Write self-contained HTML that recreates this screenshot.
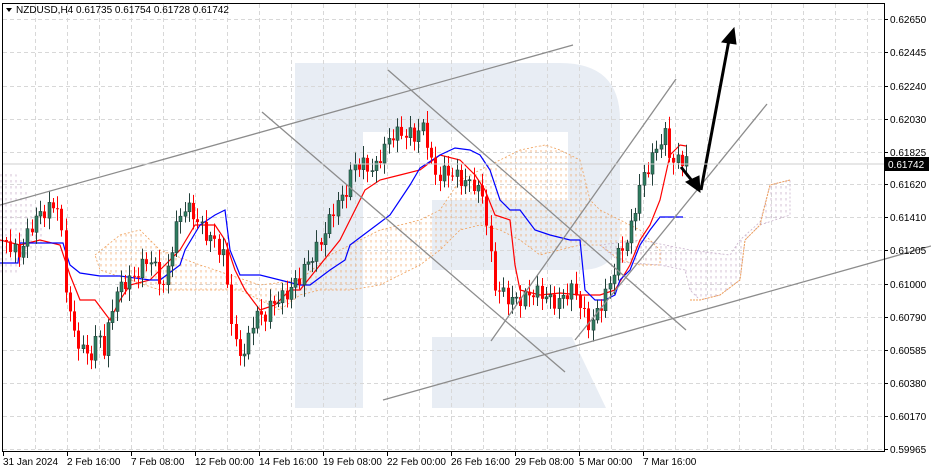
<!DOCTYPE html>
<html><head><meta charset="utf-8"><style>
html,body{margin:0;padding:0;background:#fff;}
svg{display:block;font-family:"Liberation Sans",sans-serif;}
</style></head><body>
<svg id="c" width="931" height="472" viewBox="0 0 931 472" xmlns="http://www.w3.org/2000/svg">
<defs>
<pattern id="po" width="5" height="6" patternUnits="userSpaceOnUse"><line x1="1" y1="0" x2="1" y2="2.5" stroke="#f0a05a" stroke-width="0.8" stroke-opacity="0.85"/></pattern>
<pattern id="pl" width="5" height="6" patternUnits="userSpaceOnUse"><line x1="1" y1="0" x2="1" y2="2.5" stroke="#c9b2cc" stroke-width="0.8"/></pattern>
</defs>
<rect width="931" height="472" fill="#fff"/>
<g fill="#e8edf4">
<rect x="295" y="63" width="68" height="345"/>
<path d="M295 63 H560 Q620 63 620 120 V230 Q620 270 580 270 H432 V200 H568 V132 H295 Z"/>
<path d="M432 337 H572 L606 408 H432 Z"/>
</g>
<g id="grid" stroke="#d8d8d8" stroke-dasharray="4,3" stroke-width="1"></g>
<g id="cloud">
<path fill="url(#po)" stroke="#f0a05a" stroke-width="0.8" stroke-dasharray="2,2" d="M95 255 L120 235 L140 230 L160 250 L200 265 L230 275 L260 285 L300 280 L330 255 L360 240 L380 230 L420 220 L440 210 L460 180 L480 170 L500 160 L520 150 L545 145 L560 150 L580 160 L590 200 L600 210 L620 220 L640 230 L650 240 L660 250 L660 265 L640 265 L620 260 L600 245 L580 245 L560 250 L540 255 L520 240 L500 230 L480 225 L460 230 L440 250 L420 265 L400 275 L380 285 L350 290 L320 290 L300 295 L280 310 L260 300 L240 290 L200 290 L160 290 L130 280 L100 270 Z"/>
<path fill="url(#pl)" stroke="#c9b2cc" stroke-width="0.8" stroke-dasharray="2,2" d="M600 245 L640 240 L690 250 L730 255 L740 240 L760 222 L770 185 L790 180 L790 215 L760 225 L745 240 L740 280 L720 295 L700 300 L690 290 L685 270 L660 265 L620 262 Z"/>
<path fill="url(#pl)" d="M0 172 L20 175 L30 200 L40 210 L45 250 L30 250 L15 275 L0 275 Z"/>
<path fill="none" stroke="#f0a05a" stroke-width="1" stroke-dasharray="2,1" d="M690 300 L700 300 L720 295 L740 280 L745 240 L760 225 L770 185 L790 180"/>
</g>
<polyline fill="none" stroke="#ff0000" stroke-width="1.2" points="0,240 20,245 40,240 60,245 70,275 80,300 95,300 110,320 120,300 130,285 150,280 160,270 180,250 195,225 215,225 225,240 235,270 245,290 260,310 275,305 290,290 300,290 320,265 340,240 350,220 365,190 380,180 400,175 420,170 440,155 460,160 475,175 485,190 495,215 510,220 515,265 520,290 540,295 560,293 580,295 600,295 615,290 630,265 640,240 650,225 660,200 670,155 680,145 686,146"/>
<polyline fill="none" stroke="#0000ff" stroke-width="1.2" points="0,263 18,263 20,243 63,243 65,250 70,265 80,273 100,276 120,276 150,280 160,280 180,265 185,250 200,225 215,215 225,210 230,250 240,275 260,275 280,280 300,285 310,285 330,270 345,260 350,245 370,230 390,215 400,200 410,185 420,168 440,155 455,148 470,150 480,155 490,170 500,200 510,210 520,210 535,230 550,235 570,240 580,240 585,290 595,300 605,300 615,295 620,280 630,270 640,245 650,230 660,217 683,217"/>
<g id="candles"></g>
<g stroke="#8c8c8c" stroke-width="1.3" fill="none">
<line x1="0" y1="205" x2="573" y2="45"/>
<line x1="383" y1="400" x2="931" y2="246"/>
<line x1="388" y1="70" x2="686" y2="330"/>
<line x1="262" y1="112" x2="565" y2="372"/>
<line x1="491" y1="341" x2="676" y2="79"/>
<line x1="575" y1="340" x2="767" y2="104"/>
</g>
<g stroke="#000" stroke-width="3" fill="#000">
<line x1="681" y1="167" x2="693" y2="182"/>
<polygon points="686,182 700,192 699,176" stroke-width="1"/>
<line x1="701" y1="190" x2="729" y2="40"/>
<polygon points="722,42 734,28 736,44" stroke-width="1"/>
</g>
<rect x="2.5" y="3.5" width="882" height="448" fill="none" stroke="#000" stroke-width="1"/>
<line x1="884.5" y1="3" x2="884.5" y2="452" stroke="#000"/>
<line x1="2" y1="451.5" x2="885" y2="451.5" stroke="#000"/>
<line x1="3" y1="164" x2="884" y2="164" stroke="#cfcfcf"/>
<g id="axis" font-size="10" fill="#000"></g>
<rect x="885" y="157" width="44" height="14" fill="#000"/>
<text x="888" y="168" font-size="10" fill="#fff">0.61742</text>
<polygon points="6,8 12,8 9,12" fill="#000"/>
<text x="16" y="13" font-size="10" fill="#000">NZDUSD,H4  0.61735 0.61754 0.61728 0.61742</text>
</svg>
<script>
var NS="http://www.w3.org/2000/svg";
function el(p,t,a,tx){var e=document.createElementNS(NS,t);for(var k in a)e.setAttribute(k,a[k]);if(tx)e.textContent=tx;p.appendChild(e);return e;}
var g=document.getElementById('grid');
var ys=[19,52,86,119,152,184,217,250,284,317,350,383,416,449];
var lab=["0.62650","0.62445","0.62240","0.62030","0.61825","0.61620","0.61410","0.61205","0.61000","0.60790","0.60585","0.60380","0.60170","0.59965"];
for(var x=35;x<884;x+=32)el(g,'line',{x1:x+.5,y1:4,x2:x+.5,y2:451});
ys.forEach(function(y){el(g,'line',{x1:3,y1:y+.5,x2:884,y2:y+.5});});
var ax=document.getElementById('axis');
ys.forEach(function(y,i){el(ax,'line',{x1:884,y1:y+.5,x2:888,y2:y+.5,stroke:'#000'});el(ax,'text',{x:890,y:y+4},lab[i]);});
var dl=["31 Jan 2024","2 Feb 16:00","7 Feb 08:00","12 Feb 00:00","14 Feb 16:00","19 Feb 08:00","22 Feb 00:00","26 Feb 16:00","29 Feb 08:00","5 Mar 00:00","7 Mar 16:00"];
dl.forEach(function(t,i){var x=3+i*64;el(ax,'line',{x1:x+.5,y1:451,x2:x+.5,y2:456,stroke:'#000'});el(ax,'text',{x:x,y:465},t);});
var K=[[5,240],[20,250],[35,225],[50,205],[60,200],[65,280],[75,340],[90,355],[100,330],[105,355],[115,300],[125,280],[140,270],[150,262],[165,285],[175,230],[185,210],[200,222],[215,240],[225,262],[235,345],[245,350],[255,315],[265,322],[275,300],[285,292],[300,282],[310,262],[320,240],[335,210],[345,200],[355,160],[365,162],[375,175],[385,150],[395,128],[405,132],[415,140],[425,128],[435,172],[445,172],[460,182],[475,180],[485,200],[490,250],[495,290],[510,295],[525,300],[545,292],[560,302],[575,292],[585,312],[590,322],[600,310],[610,290],[620,250],[630,232],[640,190],[650,168],[660,140],[665,128],[672,160],[680,164],[684,163]];
function at(x){for(var i=1;i<K.length;i++){if(x<=K[i][0]){var a=K[i-1],b=K[i];return a[1]+(b[1]-a[1])*(x-a[0])/(b[0]-a[0]);}}return K[K.length-1][1];}
var cg=document.getElementById('candles');
var prev=at(5);
for(var i=0;i<161;i++){var x=5+i*4.25;if(x>685)break;
 var c=at(x+2)+Math.sin(i*2.3)*7+Math.sin(i*0.7)*4;
 var o=prev; var hi=Math.min(o,c)-3-Math.abs(Math.sin(i*1.7))*9; var lo=Math.max(o,c)+3+Math.abs(Math.cos(i*1.3))*9;
 var bull=c<o; var col=bull?'#2e7d5f':'#ff0000'; var wc=bull?'#23403a':'#ff0000';
 var cx=Math.round(x)+1.5;
 el(cg,'line',{x1:cx,y1:hi,x2:cx,y2:lo,stroke:wc,'stroke-width':1});
 var t=Math.min(o,c),h=Math.max(1,Math.abs(o-c));
 el(cg,'rect',{x:cx-1.5,y:t,width:3,height:h,fill:col,stroke:bull?'#23403a':'none','stroke-width':bull?0.6:0});
 prev=c;}
</script>
</body></html>
